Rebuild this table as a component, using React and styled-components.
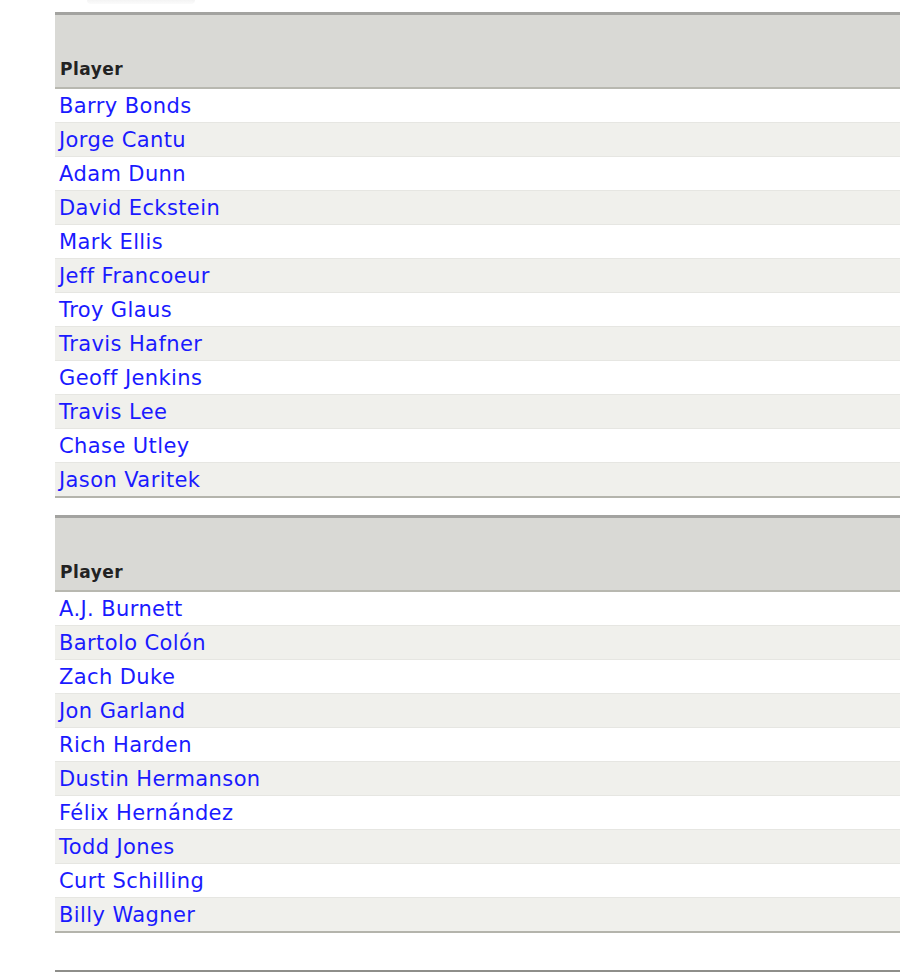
import React from 'react';
import styled, { createGlobalStyle } from 'styled-components';

const hitters = [
	'Barry Bonds',
	'Jorge Cantu',
	'Adam Dunn',
	'David Eckstein',
	'Mark Ellis',
	'Jeff Francoeur',
	'Troy Glaus',
	'Travis Hafner',
	'Geoff Jenkins',
	'Travis Lee',
	'Chase Utley',
	'Jason Varitek',
];

const pitchers = [
	'A.J. Burnett',
	'Bartolo Colón',
	'Zach Duke',
	'Jon Garland',
	'Rich Harden',
	'Dustin Hermanson',
	'Félix Hernández',
	'Todd Jones',
	'Curt Schilling',
	'Billy Wagner',
];

const PlayerTable = ({ players }) => (
	<Table>
		<thead>
			<tr>
				<HeadCell>Player</HeadCell>
			</tr>
		</thead>
		<tbody>
			{players.map((name, i) => (
				<Row key={name} $odd={i % 2 === 1}>
					<Cell>
						<PlayerLink href="#">{name}</PlayerLink>
					</Cell>
				</Row>
			))}
		</tbody>
	</Table>
);

const App = () => (
	<>
		<GlobalStyle />
		<Page>
			<ButtonShadow />
			<PlayerTable players={hitters} />
			<PlayerTable players={pitchers} />
			<NextTable />
		</Page>
	</>
);

// CSS // CSS // CSS // CSS // CSS // CSS // CSS // CSS // CSS // CSS // CSS
const GlobalStyle = createGlobalStyle`
	body {
		margin: 0;
		background: #ffffff;
		font-family: 'DejaVu Sans', Verdana, sans-serif;
	}
`;

const Page = styled.div`
	padding-left: 55px;
	overflow: hidden;
	height: 972px;
`;

const ButtonShadow = styled.div`
	width: 108px;
	height: 4px;
	margin-left: 32px;
	margin-bottom: 8px;
	border-radius: 0 0 8px 8px;
	background: linear-gradient(#f4f4f4, #fbfbfb);
`;

const Table = styled.table`
	width: 860px;
	border-collapse: collapse;
	border-top: 3px solid #a3a3a0;
	border-bottom: 2px solid #b4b4ac;
	margin-bottom: 17px;
`;

const HeadCell = styled.th`
	height: 64px;
	padding: 0 5px 8px;
	vertical-align: bottom;
	text-align: left;
	font-size: 17px;
	letter-spacing: 0.5px;
	font-weight: bold;
	color: #222222;
	background: #d9d9d5;
	border-bottom: 2px solid #b8b8b0;
`;

const Row = styled.tr`
	background: ${(p) => (p.$odd ? '#f0f0ec' : '#ffffff')};
	border-top: 1px solid #e6e6e2;

	&:first-child {
		border-top: none;
	}
`;

const Cell = styled.td`
	height: 33px;
	padding: 0 4px;
`;

const PlayerLink = styled.a`
	font-size: 21px;
	letter-spacing: 0.4px;
	color: #1a1aff;
	text-decoration: none;
`;

const NextTable = styled.div`
	height: 2px;
	margin-top: 37px;
	background: #8e8e8a;
`;

export default App;
